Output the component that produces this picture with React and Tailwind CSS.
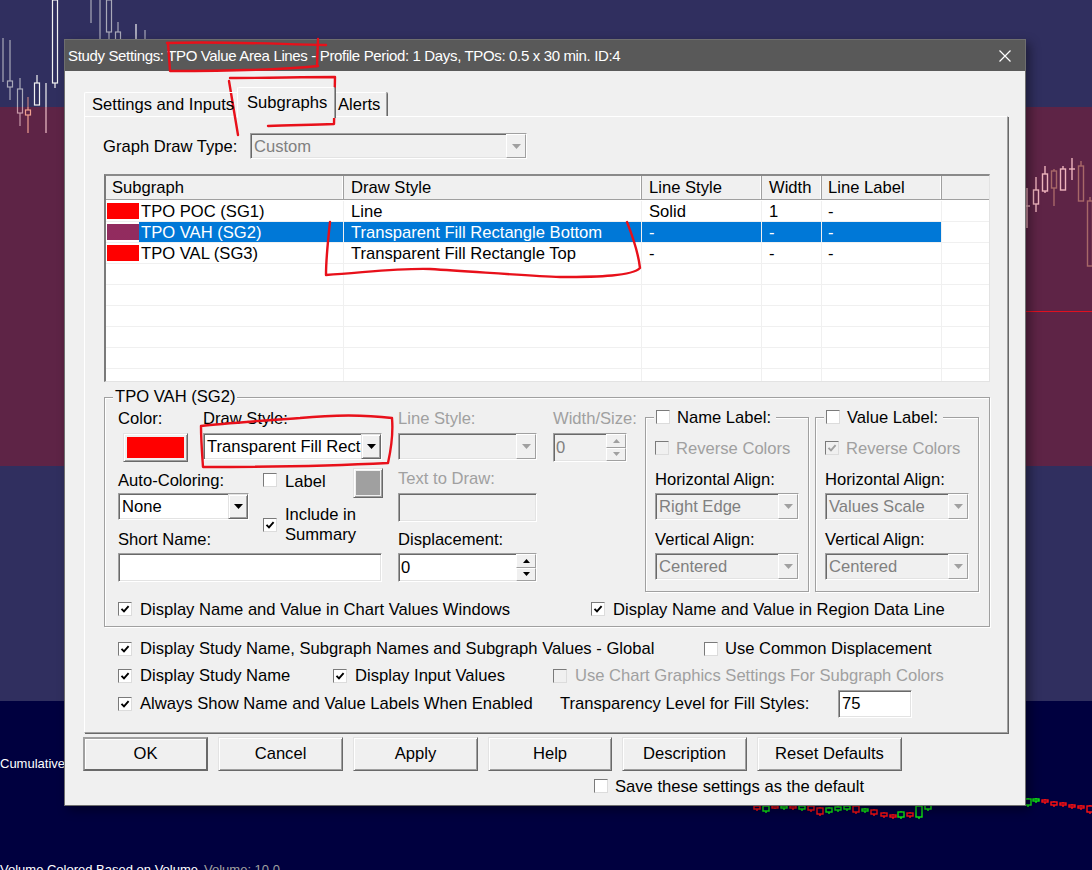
import React from "react";

const SUNKEN =
  "border border-t-[#a0a0a0] border-l-[#a0a0a0] border-r-white border-b-white shadow-[inset_1px_1px_0_#696969,inset_-1px_-1px_0_#e3e3e3]";
const RAISED =
  "border border-t-[#e3e3e3] border-l-[#e3e3e3] border-r-[#696969] border-b-[#696969] shadow-[inset_1px_1px_0_#ffffff,inset_-1px_-1px_0_#a0a0a0]";
const RAISED_THIN =
  "border border-t-white border-l-white border-r-[#a0a0a0] border-b-[#a0a0a0] bg-[#f0f0f0]";
const ETCHED =
  "border border-[#a0a0a0] shadow-[inset_1px_1px_0_#ffffff,1px_1px_0_#ffffff]";

function Check({ disabled }) {
  return (
    <svg width="12" height="12" viewBox="0 0 12 12" className="block">
      <path
        d="M2.5 5.8 L5 8.4 L9.6 3.2"
        fill="none"
        stroke={disabled ? "#a0a0a0" : "#000000"}
        strokeWidth="1.9"
      />
    </svg>
  );
}

function CheckBox({ checked, disabled, className = "" }) {
  return (
    <span
      className={`flex items-center justify-center w-[14px] h-[14px] shrink-0 border border-t-[#7a7a7a] border-l-[#7a7a7a] border-r-[#dcdcdc] border-b-[#dcdcdc] ${
        disabled ? "bg-[#f0f0f0]" : "bg-white"
      } ${className}`}
    >
      {checked && <Check disabled={disabled} />}
    </span>
  );
}

function DropBtn({ disabled }) {
  return (
    <span
      className={`flex items-center justify-center w-[20px] shrink-0 bg-[#f0f0f0] ${
        disabled ? RAISED_THIN : RAISED
      }`}
    >
      <svg width="9" height="5" viewBox="0 0 9 5">
        <path d="M0 0 H9 L4.5 5 Z" fill={disabled ? "#a0a0a0" : "#000000"} />
      </svg>
    </span>
  );
}

function Combo({ className = "", value, disabled }) {
  return (
    <div
      className={`flex ${SUNKEN} ${disabled ? "bg-[#f0f0f0]" : "bg-white"} ${className}`}
    >
      <div
        className={`flex-1 min-w-0 pl-[3px] pt-[1px] flex items-center overflow-hidden whitespace-nowrap ${
          disabled ? "text-[#808080]" : "text-black"
        }`}
      >
        {value}
      </div>
      <DropBtn disabled={disabled} />
    </div>
  );
}

function TextBox({ className = "", value, disabled }) {
  return (
    <div
      className={`flex items-center pl-[3px] pt-[1px] ${SUNKEN} ${
        disabled ? "bg-[#f0f0f0]" : "bg-white"
      } ${className}`}
    >
      {value}
    </div>
  );
}

function Spin({ className = "", value, disabled }) {
  const tri = disabled ? "#a0a0a0" : "#000000";
  return (
    <div
      className={`flex ${SUNKEN} ${
        disabled ? "bg-[#f0f0f0] text-[#808080]" : "bg-white text-black"
      } ${className}`}
    >
      <div className="flex-1 pl-[2px] pt-[1px] flex items-center">{value}</div>
      <div className="w-[20px] flex flex-col">
        <span className={`flex-1 flex items-center justify-center ${RAISED_THIN}`}>
          <svg width="7" height="4" viewBox="0 0 7 4">
            <path d="M3.5 0 L7 4 H0 Z" fill={tri} />
          </svg>
        </span>
        <span className={`flex-1 flex items-center justify-center ${RAISED_THIN}`}>
          <svg width="7" height="4" viewBox="0 0 7 4">
            <path d="M0 0 H7 L3.5 4 Z" fill={tri} />
          </svg>
        </span>
      </div>
    </div>
  );
}

function Btn({ className = "", children, isDefault }) {
  return (
    <div
      className={`h-[34px] flex items-center justify-center bg-[#f0f0f0] ${
        isDefault
          ? "border-2 border-t-[#a0a0a0] border-l-[#a0a0a0] border-r-[#696969] border-b-[#696969] shadow-[inset_1px_1px_0_#ffffff]"
          : RAISED
      } ${className}`}
    >
      {children}
    </div>
  );
}

function Tabs() {
  return (
    <div className="flex items-end h-[29px] relative z-10">
      <div className="w-[155px] h-[24px] pl-[7px] pt-[1px] flex items-center whitespace-nowrap border-t border-l border-white border-r border-r-[#a0a0a0] rounded-tl-[2px] rounded-tr-[2px] shadow-[1px_0_0_#696969]">
        Settings and Inputs
      </div>
      <div className="relative z-10 ml-[-2px] w-[98px] h-[31px] mb-[-2px] pl-[9px] pb-[1px] flex items-center whitespace-nowrap bg-[#f0f0f0] border-t border-l border-white border-r border-r-[#a0a0a0] rounded-tl-[2px] rounded-tr-[2px] shadow-[1px_0_0_#696969]">
        Subgraphs
      </div>
      <div className="ml-[-1px] w-[53px] h-[24px] pl-[4px] pt-[1px] flex items-center whitespace-nowrap border-t border-white border-r border-r-[#a0a0a0] rounded-tr-[2px] shadow-[1px_0_0_#696969]">
        Alerts
      </div>
    </div>
  );
}

function HeaderCell({ className = "", children }) {
  return (
    <div
      className={`flex items-center whitespace-nowrap border-r border-[#a0a0a0] shadow-[inset_-1px_0_0_#ffffff] ${className}`}
    >
      {children}
    </div>
  );
}

function Row({ name, style, ls, w, ll, swatch }) {
  return (
    <div className="flex h-[21px] shrink-0 border-b border-[#f0f0f0]">
      <div className="w-[238px] flex items-center border-r border-[#f0f0f0] whitespace-nowrap">
        {swatch && <span className="ml-[1px] w-[32px] h-[16px] bg-[#ff0000]" />}
        <span className="ml-[2px] pt-[1px]">{name}</span>
      </div>
      <div className="w-[298px] pl-[7px] pt-[1px] flex items-center border-r border-[#f0f0f0] whitespace-nowrap">
        {style}
      </div>
      <div className="w-[120px] pl-[7px] pt-[1px] flex items-center border-r border-[#f0f0f0]">
        {ls}
      </div>
      <div className="w-[60px] pl-[7px] pt-[1px] flex items-center border-r border-[#f0f0f0]">{w}</div>
      <div className="w-[120px] pl-[6px] pt-[1px] flex items-center border-r border-[#f0f0f0]">
        {ll}
      </div>
      <div className="flex-1" />
    </div>
  );
}

function SubgraphTable() {
  return (
    <div className="ml-[19px] mt-[15px] w-[886px] h-[208px] shrink-0 bg-white overflow-hidden border-t-2 border-l-2 border-t-[#8a8a8a] border-l-[#7a7a7a] border-r border-b border-r-[#e3e3e3] border-b-[#e3e3e3] flex flex-col">
      <div className="flex h-[24px] shrink-0 bg-[#f0f0f0] border-b border-[#a0a0a0]">
        <HeaderCell className="w-[238px] pl-[6px]">Subgraph</HeaderCell>
        <HeaderCell className="w-[298px] pl-[7px]">Draw Style</HeaderCell>
        <HeaderCell className="w-[120px] pl-[7px]">Line Style</HeaderCell>
        <HeaderCell className="w-[60px] pl-[7px]">Width</HeaderCell>
        <HeaderCell className="w-[120px] pl-[6px]">Line Label</HeaderCell>
        <div className="flex-1" />
      </div>
      <div className="mt-[1px] flex flex-col">
        <Row swatch name="TPO POC (SG1)" style="Line" ls="Solid" w="1" ll="-" />
        <div className="flex h-[21px] shrink-0 border-b border-[#f0f0f0] text-white">
          <div className="w-[238px] flex items-center border-r border-[#f0f0f0] whitespace-nowrap">
            <span className="ml-[1px] w-[32px] h-[16px] bg-[#ee0a14] bg-[image:radial-gradient(circle,#3050b0_0.5px,transparent_0.9px)] bg-[length:2px_2px]" />
            <span className="flex-1 self-stretch bg-[#0078d7] pl-[2px] pt-[1px] flex items-center">
              TPO VAH (SG2)
            </span>
          </div>
          <div className="w-[298px] pl-[7px] pt-[1px] flex items-center bg-[#0078d7] border-r border-[#f0f0f0] whitespace-nowrap">
            Transparent Fill Rectangle Bottom
          </div>
          <div className="w-[120px] pl-[7px] pt-[1px] flex items-center bg-[#0078d7] border-r border-[#f0f0f0]">
            -
          </div>
          <div className="w-[60px] pl-[7px] pt-[1px] flex items-center bg-[#0078d7] border-r border-[#f0f0f0]">
            -
          </div>
          <div className="w-[120px] pl-[6px] pt-[1px] flex items-center bg-[#0078d7] border-r border-[#f0f0f0]">
            -
          </div>
          <div className="flex-1" />
        </div>
        <Row swatch name="TPO VAL (SG3)" style="Transparent Fill Rectangle Top" ls="-" w="-" ll="-" />
        <Row />
        <Row />
        <Row />
        <Row />
        <Row />
        <Row />
      </div>
    </div>
  );
}

function LabelGroup({ title, reverseChecked, hAlign, className = "" }) {
  return (
    <div
      className={`relative w-[164px] mt-[9px] h-[175px] shrink-0 ${ETCHED} pl-[9px] pt-[20px] flex flex-col ${className}`}
    >
      <div className="absolute left-[8px] top-[-11px] h-[20px] pl-[2px] pr-[5px] bg-[#f0f0f0] flex items-center whitespace-nowrap">
        <CheckBox />
        <span className="ml-[7px] pt-[1px]">{title}</span>
      </div>
      <div className="flex items-center h-[20px]">
        <CheckBox disabled checked={reverseChecked} />
        <span className="ml-[7px] pt-[1px] text-[#a0a0a0] whitespace-nowrap">Reverse Colors</span>
      </div>
      <span className="h-[20px] mt-[12px] whitespace-nowrap">Horizontal Align:</span>
      <Combo disabled className="mt-[3px] w-[144px] h-[27px]" value={hAlign} />
      <span className="h-[20px] mt-[10px] whitespace-nowrap">Vertical Align:</span>
      <Combo disabled className="mt-[3px] w-[144px] h-[27px]" value="Centered" />
    </div>
  );
}

function SubgraphGroup() {
  return (
    <div className={`relative ml-[19px] mt-[15px] w-[886px] h-[230px] shrink-0 ${ETCHED} pl-[13px] pt-[10px]`}>
      <span className="absolute left-[8px] top-[-11px] px-[2px] bg-[#f0f0f0] whitespace-nowrap">
        TPO VAH (SG2)
      </span>
      <div className="flex items-start">
        <div className="w-[265px] shrink-0 flex flex-col">
          <div className="flex h-[55px]">
            <div className="w-[85px] flex flex-col">
              <span className="h-[20px] pt-[1px]">Color:</span>
              <div className={`ml-[5px] mt-[5px] w-[65px] h-[29px] p-[3px] bg-[#f0f0f0] ${RAISED}`}>
                <div className="w-full h-full bg-[#ff0000]" />
              </div>
            </div>
            <div className="flex flex-col">
              <span className="h-[20px] pt-[1px] whitespace-nowrap">Draw Style:</span>
              <Combo
                className="mt-[5px] w-[179px] h-[27px]"
                value="Transparent Fill Rectangle Bottom"
              />
            </div>
          </div>
          <div className="flex h-[60px] mt-[5px]">
            <div className="w-[145px] flex flex-col">
              <span className="h-[20px] mt-[3px] whitespace-nowrap">Auto-Coloring:</span>
              <Combo className="mt-[2px] w-[131px] h-[27px]" value="None" />
            </div>
            <div className="flex-1 flex flex-col">
              <div className="flex items-start h-[30px]">
                <CheckBox className="mt-[5px]" />
                <span className="ml-[8px] mt-[4px]">Label</span>
                <div className={`ml-auto w-[30px] h-[30px] p-[2px] bg-[#f0f0f0] ${RAISED}`}>
                  <div className="w-full h-full bg-[#a0a0a0]" />
                </div>
              </div>
              <div className="flex items-center mt-[7px]">
                <CheckBox checked />
                <span className="ml-[8px] leading-[20px] whitespace-nowrap">
                  Include in
                  <br />
                  Summary
                </span>
              </div>
            </div>
          </div>
          <div className="flex flex-col">
            <span className="h-[20px] mt-[2px] whitespace-nowrap">Short Name:</span>
            <TextBox className="mt-[3px] w-[264px] h-[29px]" />
          </div>
        </div>
        <div className="ml-[15px] w-[139px] shrink-0 flex flex-col">
          <span className="h-[20px] pt-[1px] text-[#a0a0a0] whitespace-nowrap">Line Style:</span>
          <Combo disabled className="mt-[5px] h-[27px]" value="" />
          <span className="h-[20px] mt-[9px] text-[#a0a0a0] whitespace-nowrap">Text to Draw:</span>
          <TextBox disabled className="mt-[4px] h-[29px]" />
          <span className="h-[20px] mt-[8px] whitespace-nowrap">Displacement:</span>
          <Spin className="mt-[3px] h-[29px]" value="0" />
        </div>
        <div className="ml-[16px] w-[74px] shrink-0 flex flex-col">
          <span className="h-[20px] pt-[1px] text-[#a0a0a0] whitespace-nowrap">Width/Size:</span>
          <Spin disabled className="mt-[5px] h-[29px]" value="0" />
        </div>
        <LabelGroup className="ml-[18px]" title="Name Label:" hAlign="Right Edge" />
        <LabelGroup className="ml-[6px]" title="Value Label:" reverseChecked hAlign="Values Scale" />
      </div>
      <div className="flex items-center h-[20px] mt-[7px]">
        <div className="w-[473px] flex items-center">
          <CheckBox checked />
          <span className="ml-[8px] pt-[1px] whitespace-nowrap">Display Name and Value in Chart Values Windows</span>
        </div>
        <div className="flex items-center">
          <CheckBox checked />
          <span className="ml-[8px] pt-[1px] whitespace-nowrap">Display Name and Value in Region Data Line</span>
        </div>
      </div>
    </div>
  );
}

function Panel() {
  return (
    <div className="relative h-[617px] shrink-0 border border-t-white border-l-white border-r-[#a0a0a0] border-b-[#a0a0a0] shadow-[1px_1px_0_#696969] flex flex-col">
      <div className="flex items-center mt-[16px] ml-[18px]">
        <span className="w-[147px] pt-[1px] whitespace-nowrap">Graph Draw Type:</span>
        <Combo disabled className="w-[277px] h-[26px]" value="Custom" />
      </div>
      <SubgraphTable />
      <SubgraphGroup />
      <div className="ml-[33px] mt-[7px] flex flex-col">
        <div className="flex items-center h-[28px] pt-[1px]">
          <div className="w-[586px] flex items-center">
            <CheckBox checked />
            <span className="ml-[8px] pt-[1px] whitespace-nowrap">
              Display Study Name, Subgraph Names and Subgraph Values - Global
            </span>
          </div>
          <div className="flex items-center">
            <CheckBox />
            <span className="ml-[7px] pt-[1px] whitespace-nowrap">Use Common Displacement</span>
          </div>
        </div>
        <div className="flex items-center h-[27px]">
          <div className="w-[215px] flex items-center">
            <CheckBox checked />
            <span className="ml-[8px] pt-[1px] whitespace-nowrap">Display Study Name</span>
          </div>
          <div className="w-[220px] flex items-center">
            <CheckBox checked />
            <span className="ml-[8px] pt-[1px] whitespace-nowrap">Display Input Values</span>
          </div>
          <div className="flex items-center">
            <CheckBox disabled />
            <span className="ml-[8px] pt-[1px] text-[#a0a0a0] whitespace-nowrap">
              Use Chart Graphics Settings For Subgraph Colors
            </span>
          </div>
        </div>
        <div className="flex items-center h-[28px] pt-[1px]">
          <div className="w-[442px] flex items-center">
            <CheckBox checked />
            <span className="ml-[8px] pt-[1px] whitespace-nowrap">
              Always Show Name and Value Labels When Enabled
            </span>
          </div>
          <span className="w-[278px] pt-[1px] whitespace-nowrap">Transparency Level for Fill Styles:</span>
          <TextBox className="w-[74px] h-[28px]" value="75" />
        </div>
      </div>
    </div>
  );
}

function Dialog() {
  return (
    <div className="absolute left-[64px] top-[39px] w-[962px] h-[767px] flex flex-col bg-[#f0f0f0] border border-[#6e6e6e] shadow-[4px_4px_10px_rgba(0,0,0,0.4)] text-[16.6px] leading-[20px] text-black">
      <div className="h-[31px] shrink-0 bg-[#595959] flex items-center justify-between pl-[3px] pr-[14px]">
        <span className="text-[15px] tracking-[-0.35px] text-white whitespace-nowrap">
          Study Settings: TPO Value Area Lines - Profile Period: 1 Days, TPOs: 0.5 x 30 min. ID:4
        </span>
        <svg width="12" height="12" viewBox="0 0 12 12">
          <path d="M0.5 0.5 L11.5 11.5 M11.5 0.5 L0.5 11.5" stroke="#ffffff" strokeWidth="1.2" />
        </svg>
      </div>
      <div className="flex-1 flex flex-col pl-[19px] pr-[17px] pt-[16px]">
        <Tabs />
        <Panel />
        <div className="flex mt-[4px] ml-[-1px] gap-[10px]">
          <Btn isDefault className="w-[125px]">OK</Btn>
          <Btn className="w-[125px]">Cancel</Btn>
          <Btn className="w-[125px]">Apply</Btn>
          <Btn className="w-[124px]">Help</Btn>
          <Btn className="w-[125px]">Description</Btn>
          <Btn className="w-[145px]">Reset Defaults</Btn>
        </div>
        <div className="flex items-center h-[20px] mt-[5px] ml-[510px]">
          <CheckBox />
          <span className="ml-[7px] pt-[1px] whitespace-nowrap">Save these settings as the default</span>
        </div>
      </div>
    </div>
  );
}

const LEFT_CANDLES = [
  { x: 3, w: [38, 82] },
  { x: 10, w: [40, 100], b: [81, 87] },
  { x: 20, w: [78, 126], b: [89, 113] },
  { x: 28, w: [97, 133], b: [110, 115], red: true },
  { x: 37, w: [75, 105], b: [83, 105], bright: true },
  { x: 46, w: [83, 133], bright: true },
  { x: 55, w: [0, 88], b: [0, 83], bright: true },
  { x: 91, w: [0, 23] },
  { x: 100, w: [0, 40] },
  { x: 109, w: [0, 40], b: [0, 32] },
  { x: 118, w: [22, 62], b: [32, 45] },
  { x: 136, w: [24, 62], bright: true },
  { x: 145, w: [30, 62] },
];

const RIGHT_CANDLES = [
  { x: 1027, w: [188, 228], t: 206 },
  { x: 1036, w: [177, 212], b: [190, 204] },
  { x: 1045, w: [166, 193], b: [174, 191] },
  { x: 1054, w: [169, 206], b: [171, 188], dark: true },
  { x: 1063, w: [166, 190], b: [169, 190] },
  { x: 1072, w: [158, 180], t: 169 },
  { x: 1081, w: [161, 201], b: [166, 201], dark: true },
  { x: 1090, w: [197, 266], b: [201, 266], dark: true },
];

const MARKS = [
  [757, 806, 810, "r"], [766, 806, 812, "g"], [775, 806, 808, "r"], [784, 806, 809, "g"],
  [793, 806, 809, "r"], [802, 806, 810, "g"], [811, 806, 811, "r"], [820, 808, 815, "r"],
  [829, 808, 813, "g"], [838, 807, 811, "g"], [847, 806, 810, "g"], [856, 806, 813, "r"],
  [865, 809, 812, "g"], [874, 810, 815, "r"], [884, 813, 817, "r"], [893, 815, 818, "r"],
  [901, 812, 818, "g"], [910, 813, 817, "r"], [919, 806, 818, "g"], [928, 805, 810, "g"],
  [1028, 799, 806, "g"], [1036, 799, 802, "g"], [1045, 800, 803, "r"], [1054, 802, 806, "r"],
  [1063, 803, 806, "r"], [1072, 805, 808, "r"], [1081, 806, 809, "r"], [1090, 806, 813, "r"],
];

function Chart() {
  return (
    <svg className="absolute left-0 top-0 pointer-events-none" width="1092" height="870" viewBox="0 0 1092 870">
      <defs>
        <clipPath id="topband">
          <rect x="0" y="0" width="1092" height="107" />
        </clipPath>
        <clipPath id="midband">
          <rect x="0" y="107" width="1092" height="359" />
        </clipPath>
      </defs>
      <g clipPath="url(#topband)">
        {LEFT_CANDLES.map((c, i) => {
          const col = c.red ? "#c08080" : c.bright ? "#f2f2f2" : "#a9a9b9";
          return (
            <g key={i} stroke={col} strokeWidth="1.2" fill="none">
              <line x1={c.x} y1={c.w[0]} x2={c.x} y2={c.w[1]} />
              {c.b && (
                <rect x={c.x - 2.5} y={c.b[0]} width="5" height={c.b[1] - c.b[0]} fill="#302f5f" />
              )}
            </g>
          );
        })}
      </g>
      <g clipPath="url(#midband)">
        {LEFT_CANDLES.map((c, i) => {
          const col = c.red ? "#f0a090" : c.bright ? "#f0c0c8" : "#c89aa8";
          return (
            <g key={i} stroke={col} strokeWidth="1.2" fill="none">
              <line x1={c.x} y1={c.w[0]} x2={c.x} y2={c.w[1]} />
              {c.b && (
                <rect x={c.x - 2.5} y={c.b[0]} width="5" height={c.b[1] - c.b[0]} fill="#5e2446" />
              )}
            </g>
          );
        })}
        {RIGHT_CANDLES.map((c, i) => {
          const col = c.dark ? "#a86868" : "#eeb4bc";
          return (
            <g key={"r" + i} stroke={col} strokeWidth="1.4" fill="none">
              <line x1={c.x} y1={c.w[0]} x2={c.x} y2={c.w[1]} />
              {c.t && <line x1={c.x - 3} y1={c.t} x2={c.x + 3} y2={c.t} />}
              {c.b && (
                <rect x={c.x - 2.5} y={c.b[0]} width="5" height={c.b[1] - c.b[0]} fill="#5e2446" />
              )}
            </g>
          );
        })}
        <line x1="1026" y1="311.5" x2="1092" y2="311.5" stroke="#e01020" strokeWidth="1" />
      </g>
      {MARKS.map(([x, y1, y2, c], i) => {
        const col = c === "r" ? "#ff1010" : "#10ee10";
        return (
          <g key={"m" + i} stroke={col} strokeWidth="1.4" fill="none">
            <line x1={x} y1={y1 - 1} x2={x} y2={y2 + 1} />
            <rect x={x - 3} y={y1} width="6" height={Math.max(2, y2 - y1 - 1)} fill="#00003f" />
          </g>
        );
      })}
    </svg>
  );
}

function Annotations() {
  return (
    <svg className="absolute left-0 top-0 pointer-events-none" width="1092" height="870" viewBox="0 0 1092 870">
      <g fill="none" stroke="#e8101a" strokeWidth="2.4" strokeLinecap="round" strokeLinejoin="round">
        <path d="M167 43 C 215 41, 275 44, 326 45" />
        <path d="M168 43 L 170 71 C 220 71, 280 70, 318 66" />
        <path d="M318 39 L 317 66" />
        <path d="M230 78 C 270 78, 300 77, 335 77 L 334 124 C 310 125, 290 125, 268 126" />
        <path d="M229 81 C 232 100, 235 118, 238 135" />
        <path d="M330 222 C 328 240, 326 258, 326 275 C 370 272, 400 268, 430 269 C 480 272, 530 276, 560 277 C 600 277, 632 276, 640 268 C 638 250, 632 235, 627 222" />
        <path d="M201 426 C 201 440, 202 452, 203 467 C 260 467, 330 466, 388 463 C 392 445, 393 430, 392 418 C 360 414, 330 415, 300 418 C 260 421, 225 423, 201 426" />
      </g>
    </svg>
  );
}

export default function App() {
  return (
    <div className="relative w-[1092px] h-[870px] overflow-hidden font-['Liberation_Sans',Arial,sans-serif] select-none">
      <div className="flex flex-col h-full">
        <div className="h-[107px] shrink-0 bg-[#302f5f]" />
        <div className="h-[359px] shrink-0 bg-[#5e2446]" />
        <div className="h-[235px] shrink-0 bg-[#302f5f]" />
        <div className="flex-1 bg-[#00003f] flex flex-col text-[13px] leading-[16px] text-white">
          <div className="mt-[55px] whitespace-nowrap">Cumulative</div>
          <div className="mt-[90px] whitespace-nowrap">
            Volume Colored Based on Volume
            <span className="ml-[6px] text-[#a0a0a0]">Volume: 10.0</span>
          </div>
        </div>
      </div>
      <Chart />
      <Dialog />
      <Annotations />
    </div>
  );
}
